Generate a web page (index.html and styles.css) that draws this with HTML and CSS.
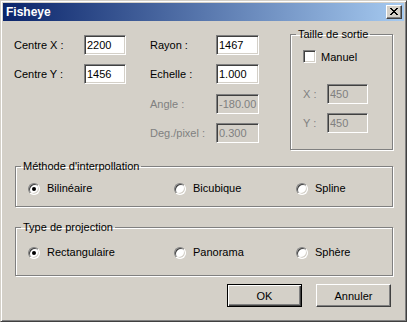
FILE: index.html
```html
<!DOCTYPE html>
<html lang="fr">
<head>
<meta charset="utf-8">
<title>Fisheye</title>
<link rel="stylesheet" href="styles.css">
</head>
<body>
<div class="window">
  <div class="titlebar">
    <span class="title">Fisheye</span>
    <span class="close">
      <svg width="8" height="7" viewBox="0 0 8 7" shape-rendering="crispEdges">
        <path d="M0 0h2v1h-2z M6 0h2v1h-2z M1 1h2v1h-2z M5 1h2v1h-2z M2 2h4v1h-4z M3 3h2v1h-2z M2 4h4v1h-4z M1 5h2v1h-2z M5 5h2v1h-2z M0 6h2v1h-2z M6 6h2v1h-2z" fill="#000"/>
      </svg>
    </span>
  </div>
  <div class="client">
    <div class="top">
      <div class="fields col1">
        <span class="lbl">Centre X :</span><span class="edit">2200</span>
        <span class="lbl">Centre Y :</span><span class="edit">1456</span>
      </div>
      <div class="fields col2">
        <span class="lbl">Rayon :</span><span class="edit">1467</span>
        <span class="lbl">Echelle :</span><span class="edit">1.000</span>
        <span class="lbl disabled">Angle :</span><span class="edit disabled">-180.00</span>
        <span class="lbl disabled">Deg./pixel :</span><span class="edit disabled">0.300</span>
      </div>
      <fieldset class="group taille">
        <legend>Taille de sortie</legend>
        <div class="taille-body">
          <div class="check-row"><span class="checkbox"></span><span>Manuel</span></div>
          <div class="fields col3">
            <span class="lbl disabled">X :</span><span class="edit disabled">450</span>
            <span class="lbl disabled">Y :</span><span class="edit disabled">450</span>
          </div>
        </div>
      </fieldset>
    </div>
    <fieldset class="group wide methode">
      <legend>Méthode d'interpollation</legend>
      <div class="radio-row">
        <span class="opt"><span class="radio on"></span>Bilinéaire</span>
        <span class="opt"><span class="radio"></span>Bicubique</span>
        <span class="opt"><span class="radio"></span>Spline</span>
      </div>
    </fieldset>
    <fieldset class="group wide projection">
      <legend>Type de projection</legend>
      <div class="radio-row">
        <span class="opt"><span class="radio on"></span>Rectangulaire</span>
        <span class="opt"><span class="radio"></span>Panorama</span>
        <span class="opt"><span class="radio"></span>Sphère</span>
      </div>
    </fieldset>
    <div class="buttons">
      <button class="btn default">OK</button>
      <button class="btn">Annuler</button>
    </div>
  </div>
</div>
</body>
</html>
```
FILE: styles.css
```css
html, body {
  margin: 0;
  padding: 0;
  background: #d4d0c8;
}

body {
  font-family: "Liberation Sans", Arial, sans-serif;
  font-size: 11px;
  color: #000;
}

.window {
  box-sizing: border-box;
  width: 407px;
  height: 322px;
  background: #d4d0c8;
  border-style: solid;
  border-width: 1px;
  border-color: #d4d0c8 #404040 #404040 #d4d0c8;
  box-shadow: inset 1px 1px 0 #fff, inset -1px -1px 0 #808080;
  padding: 2px;
  display: flex;
  flex-direction: column;
}

.titlebar {
  height: 18px;
  background: linear-gradient(to right, #0a246a, #a6caf0);
  display: flex;
  align-items: center;
  justify-content: space-between;
  padding: 0 2px 0 3px;
}

.title {
  color: #fff;
  font-weight: bold;
  font-size: 12px;
  line-height: 14px;
}

.close {
  box-sizing: border-box;
  width: 16px;
  height: 14px;
  background: #d4d0c8;
  border-style: solid;
  border-width: 1px;
  border-color: #fff #404040 #404040 #fff;
  box-shadow: inset -1px -1px 0 #808080;
  display: flex;
  align-items: center;
  justify-content: center;
  padding: 0 1px 1px 0;
}

.close svg {
  display: block;
}

.client {
  flex: 1;
  padding: 0 11px;
  display: flex;
  flex-direction: column;
}

.top {
  display: flex;
  align-items: flex-start;
}

.fields {
  display: grid;
  align-items: center;
}

.col1 {
  margin-top: 14px;
  grid-template-columns: 70px 42px;
  grid-template-rows: 29px 20px;
}

.col2 {
  margin-top: 14px;
  margin-left: 24px;
  grid-template-columns: 66px 43px;
  grid-template-rows: 29px 30px 29px 20px;
}

.col1 .edit, .col2 .edit {
  align-self: start;
}

.col1 .lbl, .col2 .lbl {
  align-self: start;
  line-height: 20px;
}

.lbl {
  white-space: nowrap;
  line-height: 13px;
}

.lbl.disabled {
  color: #808080;
}

.edit {
  box-sizing: border-box;
  height: 20px;
  background: #fff;
  border-style: solid;
  border-width: 1px;
  border-color: #808080 #fff #fff #808080;
  box-shadow: inset 1px 1px 0 #404040, inset -1px -1px 0 #d4d0c8;
  padding: 0 2px;
  line-height: 18px;
  white-space: nowrap;
  overflow: hidden;
}

.edit.disabled {
  background: #d4d0c8;
  color: #808080;
}

.group {
  margin: 0;
  border: 1px solid #808080;
  box-shadow: inset 1px 1px 0 #fff, 1px 1px 0 #fff;
  padding: 0;
  min-width: 0;
}

.group legend {
  margin-left: 5px;
  padding: 0 2px;
  line-height: 13px;
  height: 13px;
}

.taille {
  box-sizing: border-box;
  width: 103px;
  margin-left: 31px;
  margin-top: 7px;
}

.taille-body {
  padding: 9px 0 16px 12px;
}

.check-row {
  display: flex;
  align-items: center;
  gap: 5px;
  height: 13px;
}

.checkbox {
  box-sizing: border-box;
  width: 13px;
  height: 13px;
  background: #fff;
  border-style: solid;
  border-width: 1px;
  border-color: #808080 #fff #fff #808080;
  box-shadow: inset 1px 1px 0 #404040, inset -1px -1px 0 #d4d0c8;
}

.col3 {
  margin-top: 21px;
  grid-template-columns: 24px 41px;
  grid-template-rows: 20px 20px;
  row-gap: 9px;
}

.wide {
  margin-left: 1px;
}

.methode {
  margin-top: 10px;
}

.methode .radio-row {
  padding: 9px 0 11px 12px;
}

.projection {
  margin-top: 14px;
}

.projection .radio-row {
  padding: 12px 0 16px 12px;
}

.radio-row {
  display: grid;
  grid-template-columns: 146px 122px auto;
  grid-template-rows: 13px;
  align-items: center;
}

.opt {
  display: flex;
  align-items: center;
  gap: 7px;
  white-space: nowrap;
  line-height: 13px;
}

.radio {
  position: relative;
  box-sizing: border-box;
  width: 12px;
  height: 12px;
  border-radius: 50%;
  background: #fff;
  border-style: solid;
  border-width: 1px;
  border-color: #808080 #fff #fff #808080;
  box-shadow: inset 1px 1px 0 #404040, inset -1px -1px 0 #d4d0c8;
}

.radio.on::after {
  content: "";
  position: absolute;
  left: 3px;
  top: 3px;
  width: 4px;
  height: 4px;
  border-radius: 50%;
  background: #000;
}

.buttons {
  display: flex;
  justify-content: flex-end;
  gap: 14px;
  margin-top: 8px;
  margin-right: 2px;
}

.btn {
  box-sizing: border-box;
  width: 75px;
  height: 23px;
  margin: 0;
  padding: 0;
  font: inherit;
  color: #000;
  background: #d4d0c8;
  border-style: solid;
  border-width: 1px;
  border-color: #fff #404040 #404040 #fff;
  box-shadow: inset -1px -1px 0 #808080;
}

.btn.default {
  border-color: #000;
  box-shadow: inset 1px 1px 0 #fff, inset -1px -1px 0 #404040, inset -2px -2px 0 #808080;
}
```
